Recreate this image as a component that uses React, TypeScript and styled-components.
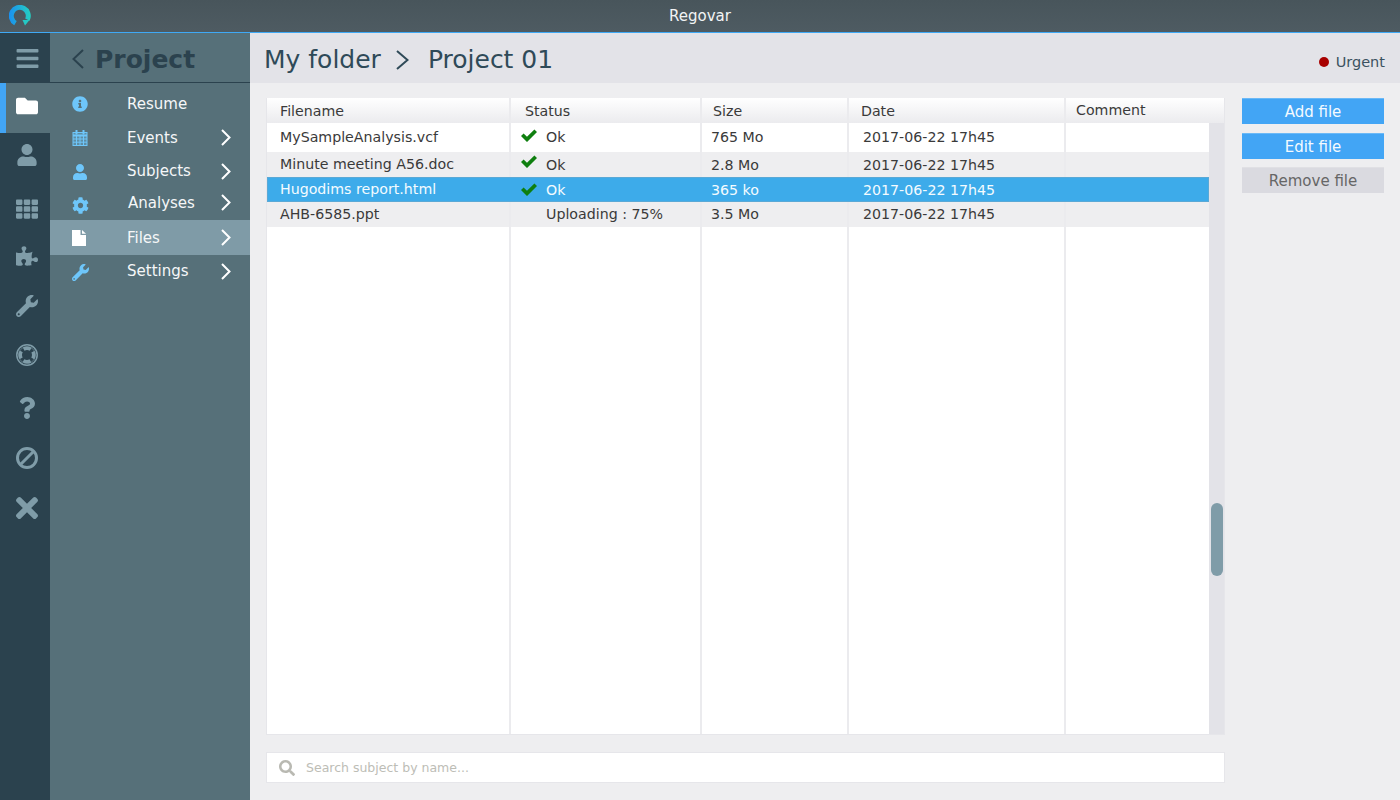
import React from 'react';
import styled, { createGlobalStyle } from 'styled-components';
import {
  FaBars,
  FaCog,
  FaFolder,
  FaInfoCircle,
  FaPuzzlePiece,
  FaQuestion,
  FaSearch,
  FaTh,
  FaTimes,
  FaUser,
  FaWrench,
} from 'react-icons/fa';

const GlobalStyle = createGlobalStyle`
  html, body {
    margin: 0;
    padding: 0;
    background: #eeeef0;
  }
  body {
    font-family: "DejaVu Sans", "Liberation Sans", sans-serif;
  }
  * {
    box-sizing: border-box;
  }
`;

const Page = styled.div`
  width: 1400px;
  height: 800px;
  display: flex;
  flex-direction: column;
  overflow: hidden;
`;

const TitleBar = styled.header`
  position: relative;
  height: 33px;
  flex: none;
  display: flex;
  align-items: center;
  justify-content: center;
  padding-bottom: 1px;
  background: linear-gradient(#48555b, #4e5b62);
  border-bottom: 1px solid #3fa9f5;
  color: #f2f4f5;
  font-size: 15px;
`;

const LogoSlot = styled.div`
  position: absolute;
  left: 9px;
  top: 5px;
  display: flex;
`;

const Body = styled.div`
  flex: 1;
  display: flex;
  min-height: 0;
`;

const Rail = styled.nav`
  width: 50px;
  flex: none;
  display: flex;
  flex-direction: column;
  background: #2b424e;
`;

const RailItem = styled.div<{ $active?: boolean; $size: number; $lift: number }>`
  height: 50px;
  flex: none;
  display: flex;
  align-items: center;
  justify-content: center;
  padding-left: 4px;
  padding-bottom: ${(p) => Math.max(p.$lift * 2, 0)}px;
  padding-top: ${(p) => Math.max(-p.$lift * 2, 0)}px;
  color: ${(p) => (p.$active ? '#ffffff' : '#7f9ca8')};
  background: ${(p) => (p.$active ? '#567079' : 'transparent')};
  box-shadow: ${(p) => (p.$active ? 'inset 6px 0 0 #42a5f5' : 'none')};
  font-size: ${(p) => p.$size}px;
`;

const SideMenu = styled.aside`
  width: 200px;
  flex: none;
  display: flex;
  flex-direction: column;
  background: #567079;
`;

const SideHeader = styled.div`
  height: 50px;
  flex: none;
  display: flex;
  align-items: center;
  gap: 11px;
  padding-left: 22px;
  padding-top: 3px;
  border-bottom: 1px solid #2b424e;
  color: #2b424e;
  font-size: 25px;
  font-weight: 700;
`;

const MenuRow = styled.div<{ $height: number; $top?: number; $active?: boolean }>`
  height: ${(p) => p.$height}px;
  flex: none;
  display: grid;
  grid-template-columns: 55px 1fr 29px;
  align-items: center;
  padding-left: 22px;
  padding-top: ${(p) => p.$top ?? 0}px;
  background: ${(p) => (p.$active ? '#7f9ba7' : 'transparent')};
  color: #f5f7f8;
  font-size: 15px;
`;

const MenuIcon = styled.span<{ $light?: boolean; $size: number; $drop?: number }>`
  display: flex;
  font-size: ${(p) => p.$size}px;
  margin-top: ${(p) => (p.$drop ?? 0) * 2}px;
  color: ${(p) => (p.$light ? '#ffffff' : '#6ec6fa')};
`;

const MenuLabel = styled.span<{ $lift?: number; $indent?: number }>`
  margin-bottom: ${(p) => (p.$lift ?? 0) * 2}px;
  padding-left: ${(p) => p.$indent ?? 0}px;
`;

const MenuChevron = styled.span<{ $lift?: number }>`
  display: flex;
  color: #ffffff;
  margin-bottom: ${(p) => (p.$lift ?? 0) * 2}px;
`;

const Main = styled.main`
  flex: 1;
  display: flex;
  flex-direction: column;
  min-width: 0;
`;

const Crumbs = styled.div`
  height: 50px;
  flex: none;
  display: flex;
  align-items: center;
  padding: 2px 15px 0 14px;
  background: #e3e3e8;
  color: #2f4a58;
  font-size: 25px;
`;

const CrumbArrow = styled.span`
  display: flex;
  margin: 1px 19px 0 15px;
  color: #2f4a58;
`;

const Urgent = styled.div`
  margin-left: auto;
  margin-top: 5px;
  display: flex;
  align-items: center;
  gap: 7px;
  font-size: 14.5px;
  color: #3b5260;
`;

const UrgentDot = styled.span`
  width: 10px;
  height: 10px;
  border-radius: 50%;
  background: #a80000;
`;

const Content = styled.div`
  flex: 1;
  display: grid;
  grid-template-columns: 959px 142px;
  column-gap: 17px;
  padding: 15px 0 17px 16px;
  min-height: 0;
`;

const TableColumn = styled.div`
  display: flex;
  flex-direction: column;
  gap: 17px;
  min-height: 0;
`;

const TableFrame = styled.div`
  position: relative;
  flex: 1;
  display: flex;
  flex-direction: column;
  padding-right: 15px;
  background: #e3e3e8;
  border: 1px solid #e6e6ea;
  border-top: 0;
  min-height: 0;
`;

const COLUMNS = '244px 191px 147px 217px 1fr';

const HeadRow = styled.div`
  display: grid;
  grid-template-columns: ${COLUMNS};
  height: 25px;
  flex: none;
  margin-right: -15px;
  background: linear-gradient(#ffffff, #ebebee);
  color: #3a3a3a;
  font-size: 14.2px;
`;

const HeadCell = styled.div<{ $pad: number }>`
  display: flex;
  align-items: center;
  padding: 1px 0 0 ${(p) => p.$pad}px;
  border-right: 2px solid #ebebee;
  &:last-child {
    border-right: 0;
    padding-top: 0;
    padding-bottom: 1px;
  }
`;

const Row = styled.div<{ $height: number; $tone: 'white' | 'grey' | 'selected' }>`
  display: grid;
  grid-template-columns: ${COLUMNS};
  height: ${(p) => p.$height}px;
  flex: none;
  font-size: 14.2px;
  color: ${(p) => (p.$tone === 'selected' ? '#f4fbff' : '#3a3a3a')};
  background: ${(p) =>
    p.$tone === 'selected' ? '#3dabea' : p.$tone === 'grey' ? '#eeeef0' : '#ffffff'};
  box-shadow: ${(p) => (p.$tone === 'selected' ? 'inset 0 0 0 1px #5aa9d6' : 'none')};
`;

const Cell = styled.div<{ $pad: number; $shift?: number; $selected?: boolean }>`
  display: flex;
  align-items: center;
  padding-left: ${(p) => p.$pad}px;
  padding-bottom: ${(p) => p.$shift ?? 0}px;
  border-right: 2px solid ${(p) => (p.$selected ? 'transparent' : '#ebebee')};
  white-space: nowrap;
  &:last-child {
    border-right: 0;
  }
`;

const CheckMark = styled.span<{ $up: number }>`
  display: flex;
  width: 25px;
  color: #0f7f0f;
  margin-bottom: ${(p) => p.$up}px;
`;

const Filler = styled.div`
  flex: 1;
  display: grid;
  grid-template-columns: ${COLUMNS};
  background: #ffffff;
`;

const FillerCell = styled.div`
  border-right: 2px solid #ebebee;
  &:last-child {
    border-right: 0;
  }
`;

const ScrollThumb = styled.div`
  position: absolute;
  right: 1px;
  top: 405px;
  width: 12px;
  height: 73px;
  border-radius: 6px;
  background: #7f9ca8;
`;

const SearchBox = styled.div`
  height: 31px;
  flex: none;
  display: flex;
  align-items: center;
  gap: 11px;
  padding-left: 12px;
  background: #ffffff;
  border: 1px solid #e6e6ea;
  color: #bdbdb6;
  font-size: 12.5px;
`;

const SearchIcon = styled.span`
  display: flex;
  font-size: 16px;
  color: #b9b9b2;
`;

const Actions = styled.div`
  display: flex;
  flex-direction: column;
`;

const ActionButton = styled.button<{ $primary?: boolean; $gap: number }>`
  height: 26px;
  flex: none;
  margin-bottom: ${(p) => p.$gap}px;
  padding: 0;
  font-family: inherit;
  font-size: 15px;
  border: 0;
  border-top: 1px solid ${(p) => (p.$primary ? '#6bb9f7' : '#e0e0e4')};
  color: ${(p) => (p.$primary ? '#f4faff' : '#666666')};
  background: ${(p) => (p.$primary ? '#42a5f5' : '#dadae0')};
`;

const Chevron = ({
  width,
  height,
  stroke = 2,
  left,
}: {
  width: number;
  height: number;
  stroke?: number;
  left?: boolean;
}) => (
  <svg width={width} height={height} viewBox={`0 0 ${width} ${height}`} fill="none">
    <polyline
      points={
        left
          ? `${width - 1},1 1.5,${height / 2} ${width - 1},${height - 1}`
          : `1,1 ${width - 1.5},${height / 2} 1,${height - 1}`
      }
      stroke="currentColor"
      strokeWidth={stroke}
    />
  </svg>
);

const Logo = () => (
  <svg width="22" height="22" viewBox="0 0 22 22" fill="none">
    <defs>
      <linearGradient id="logo-ring" gradientUnits="userSpaceOnUse" x1="0" y1="0" x2="22" y2="0">
        <stop offset="0" stopColor="#1a90f0" />
        <stop offset="1" stopColor="#25d0c0" />
      </linearGradient>
    </defs>
    <path
      d="M6.5 18.2 A8.5 8.5 0 1 1 18.4 14.6"
      stroke="url(#logo-ring)"
      strokeWidth="5"
    />
    <path d="M13.5 15 h7 l-4.5 5.5 z" fill="#25c8c4" />
  </svg>
);

const CalendarIcon = () => (
  <svg width="16" height="16" viewBox="0 0 16 16" fill="none" stroke="currentColor">
    <rect x="1" y="2.5" width="14" height="13" strokeWidth="1" fill="currentColor" fillOpacity="0.35" />
    <path d="M1 5.5 H15" strokeWidth="2" />
    <path d="M1 9 H15 M1 12.2 H15 M4.5 6 V15.5 M8 6 V15.5 M11.5 6 V15.5" strokeWidth="1" />
    <path d="M4.5 0.5 V3.5 M11.5 0.5 V3.5" strokeWidth="2" strokeLinecap="round" />
  </svg>
);

const FileIcon = () => (
  <svg width="14" height="16" viewBox="0 0 14 16" fill="currentColor">
    <path d="M0 0 H8.5 V5 H14 V16 H0 Z" />
    <path d="M10 0 L14 3.8 H10 Z" />
  </svg>
);

const CheckIcon = () => (
  <svg width="16" height="13" viewBox="0 0 16 13" fill="currentColor">
    <polygon points="0,7 2.6,4.4 6,7.8 13.4,0.4 16,3 6,13" />
  </svg>
);

const BanIcon = () => (
  <svg width="22" height="22" viewBox="0 0 22 22" fill="none" stroke="currentColor">
    <circle cx="11" cy="11" r="9.5" strokeWidth="3" />
    <path d="M5 17 L17 5" strokeWidth="3" />
  </svg>
);

const LifeRingIcon = () => (
  <svg width="22" height="22" viewBox="0 0 22 22" fill="none" stroke="currentColor">
    <circle cx="11" cy="11" r="10.2" strokeWidth="1.5" />
    <circle cx="11" cy="11" r="6.8" strokeWidth="3.6" strokeDasharray="7.4 3.28" strokeDashoffset="3.7" />
    <circle cx="11" cy="11" r="8.4" strokeWidth="1" opacity="0.5" />
  </svg>
);

const railIcons = [
  { icon: <FaBars />, size: 25, lift: 0 },
  { icon: <FaFolder />, size: 22, lift: 2, active: true },
  { icon: <FaUser />, size: 22, lift: 3 },
  { icon: <FaTh />, size: 22, lift: -1 },
  { icon: <FaPuzzlePiece />, size: 22, lift: 2 },
  { icon: <FaWrench />, size: 22, lift: 2 },
  { icon: <LifeRingIcon />, size: 22, lift: 3 },
  { icon: <FaQuestion />, size: 22, lift: 0 },
  { icon: <BanIcon />, size: 22, lift: 0 },
  { icon: <FaTimes />, size: 32, lift: 0 },
];

const menu = [
  { label: 'Resume', icon: <FaInfoCircle />, size: 16, height: 37, top: 4, lift: 0, drop: 0, chevron: false },
  { label: 'Events', icon: <CalendarIcon />, size: 16, height: 34, top: 1, lift: 0, drop: 0, chevron: true },
  { label: 'Subjects', icon: <FaUser />, size: 16, height: 34, lift: 0, drop: 0.5, chevron: true },
  { label: 'Analyses', icon: <FaCog />, size: 17, height: 32, lift: 1.5, drop: 1, indent: 1, chevron: true },
  { label: 'Files', icon: <FileIcon />, size: 16, height: 35, lift: 0, drop: 0, chevron: true, active: true },
  { label: 'Settings', icon: <FaWrench />, size: 17, height: 33, lift: 0.5, drop: 1, chevron: true },
];

type FileRow = {
  name: string;
  status: string;
  ok: boolean;
  size: string;
  date: string;
  height: number;
  tone: 'white' | 'grey' | 'selected';
  nameShift: number;
  cellShift: number;
  checkUp: number;
};

const files: FileRow[] = [
  { name: 'MySampleAnalysis.vcf', status: 'Ok', ok: true, size: '765 Mo', date: '2017-06-22 17h45', height: 29, tone: 'white', nameShift: 2, cellShift: 2, checkUp: 3 },
  { name: 'Minute meeting A56.doc', status: 'Ok', ok: true, size: '2.8 Mo', date: '2017-06-22 17h45', height: 25, tone: 'grey', nameShift: 1, cellShift: 0, checkUp: 6 },
  { name: 'Hugodims report.html', status: 'Ok', ok: true, size: '365 ko', date: '2017-06-22 17h45', height: 25, tone: 'selected', nameShift: 2, cellShift: 0, checkUp: 1 },
  { name: 'AHB-6585.ppt', status: 'Uploading : 75%', ok: false, size: '3.5 Mo', date: '2017-06-22 17h45', height: 25, tone: 'grey', nameShift: 2, cellShift: 2, checkUp: 0 },
];

const App = () => (
  <Page>
    <GlobalStyle />
    <TitleBar>
      <LogoSlot>
        <Logo />
      </LogoSlot>
      Regovar
    </TitleBar>
    <Body>
      <Rail>
        {railIcons.map((item, i) => (
          <RailItem key={i} $active={item.active} $size={item.size} $lift={item.lift}>
            {item.icon}
          </RailItem>
        ))}
      </Rail>
      <SideMenu>
        <SideHeader>
          <Chevron width={12} height={20} left />
          Project
        </SideHeader>
        {menu.map((item) => (
          <MenuRow key={item.label} $height={item.height} $top={item.top} $active={item.active}>
            <MenuIcon $light={item.active} $size={item.size} $drop={item.drop}>
              {item.icon}
            </MenuIcon>
            <MenuLabel $lift={item.lift} $indent={item.indent}>
              {item.label}
            </MenuLabel>
            {item.chevron ? (
              <MenuChevron $lift={item.lift}>
                <Chevron width={10} height={17} />
              </MenuChevron>
            ) : (
              <span />
            )}
          </MenuRow>
        ))}
      </SideMenu>
      <Main>
        <Crumbs>
          My folder
          <CrumbArrow>
            <Chevron width={13} height={20} />
          </CrumbArrow>
          Project 01
          <Urgent>
            <UrgentDot />
            Urgent
          </Urgent>
        </Crumbs>
        <Content>
          <TableColumn>
            <TableFrame>
              <HeadRow>
                <HeadCell $pad={13}>Filename</HeadCell>
                <HeadCell $pad={14}>Status</HeadCell>
                <HeadCell $pad={11}>Size</HeadCell>
                <HeadCell $pad={12}>Date</HeadCell>
                <HeadCell $pad={10}>Comment</HeadCell>
              </HeadRow>
              {files.map((file) => {
                const selected = file.tone === 'selected';
                return (
                  <Row key={file.name} $height={file.height} $tone={file.tone}>
                    <Cell $pad={13} $shift={file.nameShift} $selected={selected}>
                      {file.name}
                    </Cell>
                    <Cell $pad={10} $shift={file.cellShift} $selected={selected}>
                      <CheckMark $up={file.checkUp}>{file.ok ? <CheckIcon /> : null}</CheckMark>
                      {file.status}
                    </Cell>
                    <Cell $pad={9} $shift={file.cellShift} $selected={selected}>
                      {file.size}
                    </Cell>
                    <Cell $pad={14} $shift={file.cellShift} $selected={selected}>
                      {file.date}
                    </Cell>
                    <Cell $pad={0} $selected={selected} />
                  </Row>
                );
              })}
              <Filler>
                <FillerCell />
                <FillerCell />
                <FillerCell />
                <FillerCell />
                <FillerCell />
              </Filler>
              <ScrollThumb />
            </TableFrame>
            <SearchBox>
              <SearchIcon>
                <FaSearch />
              </SearchIcon>
              Search subject by name...
            </SearchBox>
          </TableColumn>
          <Actions>
            <ActionButton $primary $gap={9}>
              Add file
            </ActionButton>
            <ActionButton $primary $gap={8}>
              Edit file
            </ActionButton>
            <ActionButton $gap={0}>Remove file</ActionButton>
          </Actions>
        </Content>
      </Main>
    </Body>
  </Page>
);

export default App;
